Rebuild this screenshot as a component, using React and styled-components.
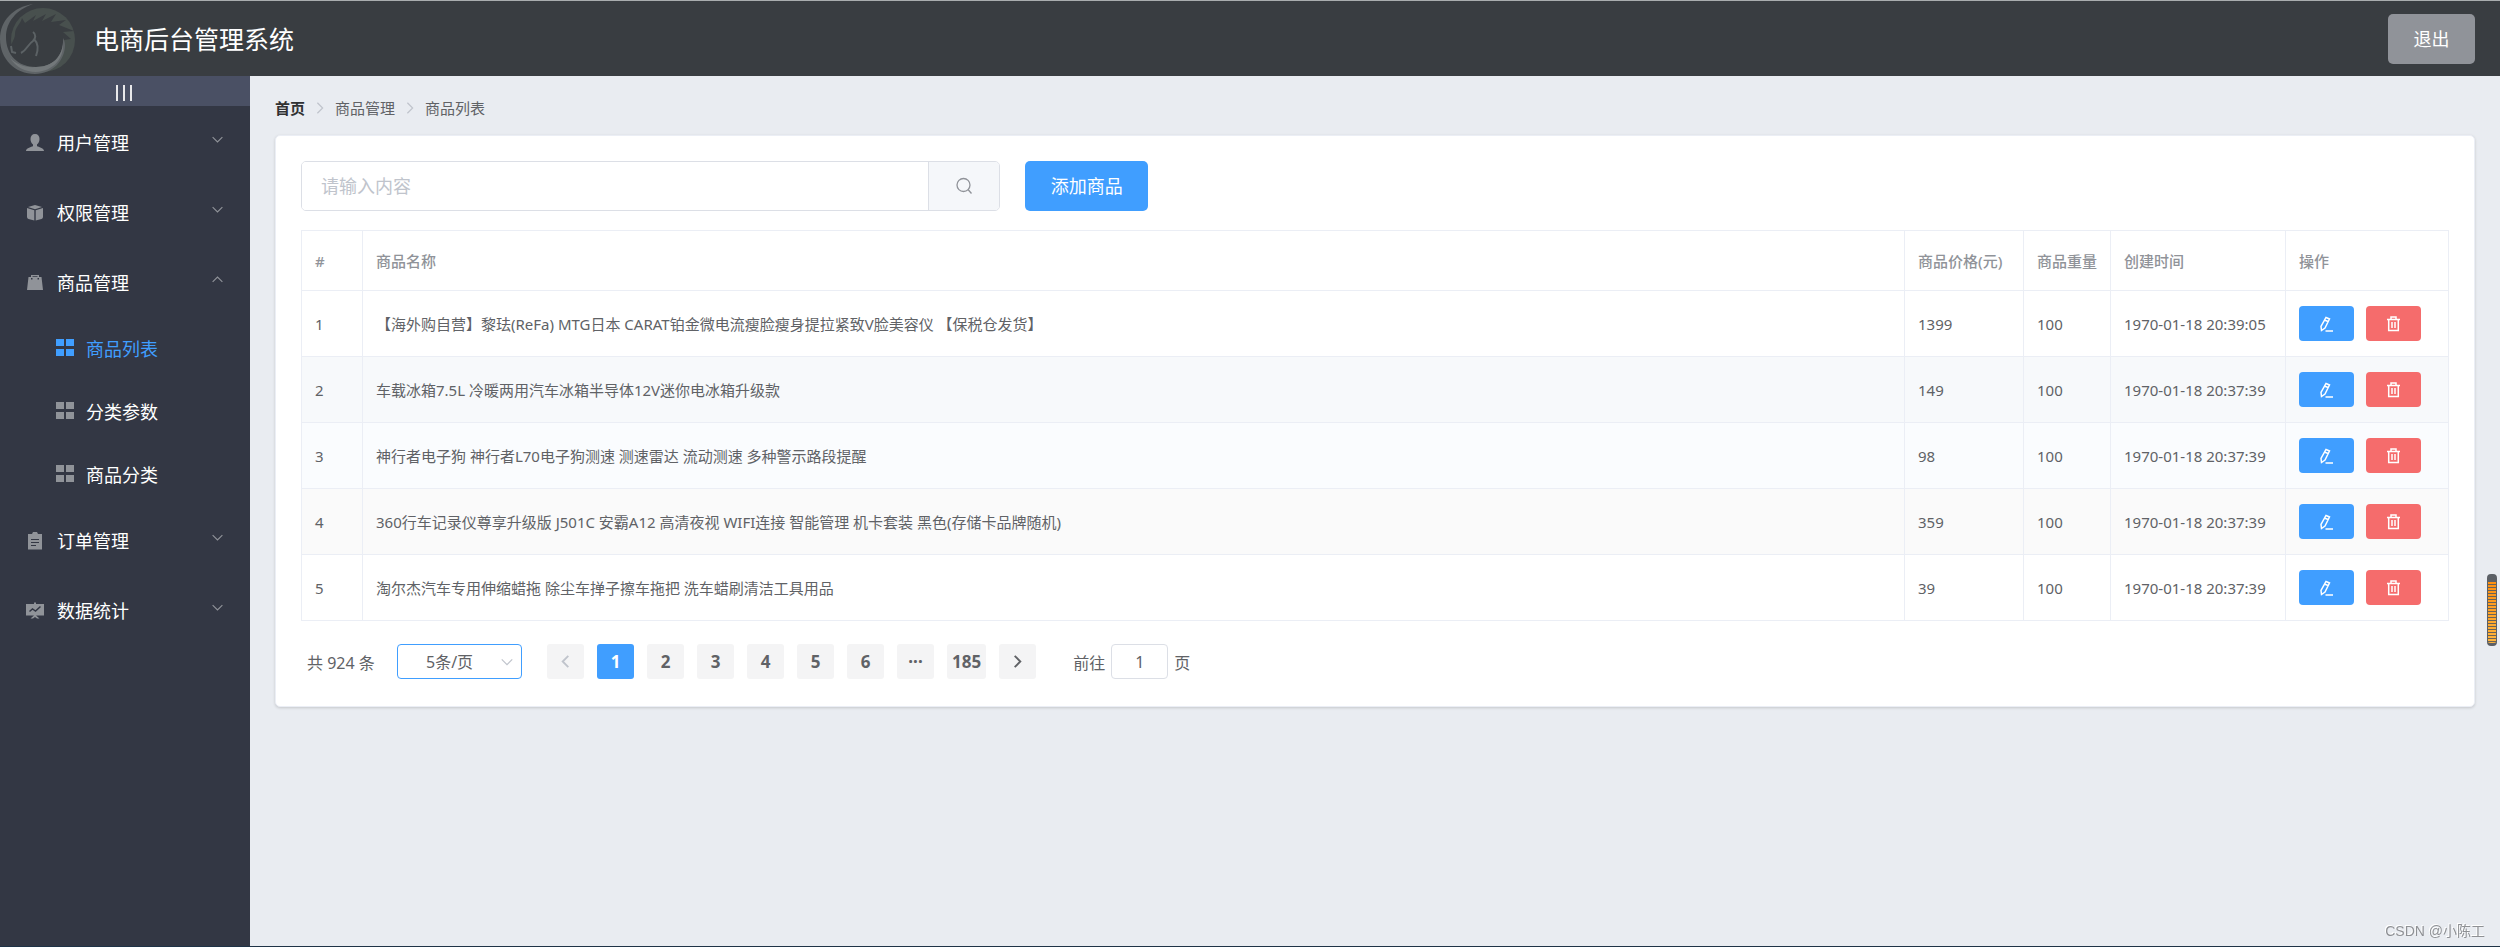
import React from 'react';
import styled, { createGlobalStyle, css } from 'styled-components';

const GlobalStyle = createGlobalStyle`
  * {
    box-sizing: border-box;
  }

  body {
    margin: 0;
    font-family: 'Noto Sans', 'Noto Sans CJK SC', sans-serif;
    background-color: #e9ecf1;
  }

  button, input, select {
    font-family: inherit;
  }
`

const Page = styled.div`
  display: flex;
  flex-direction: column;
  min-height: 100vh;
  border-top: 1px solid #a9adae;
  border-bottom: 1px solid #1f3347;
`

const Header = styled.header`
  display: flex;
  align-items: center;
  justify-content: space-between;
  height: 75px;
  padding-right: 25px;
  background-color: #393d41;
`

const Brand = styled.div`
  display: flex;
  align-items: center;
  gap: 18px;
`

const Title = styled.h1`
  margin: 0;
  font-size: 25px;
  line-height: 30px;
  font-weight: 400;
  color: #fff;
`

const LogoutButton = styled.button`
  width: 87px;
  height: 50px;
  padding: 0 0 2px;
  border: 0;
  border-radius: 5px;
  background-color: #909399;
  font-size: 18px;
  color: #fff;
  cursor: pointer;
`

const Body = styled.div`
  display: flex;
  flex: 1;
`

const Sidebar = styled.aside`
  flex: none;
  width: 250px;
  background-color: #333744;
`

const CollapseButton = styled.button`
  display: flex;
  align-items: center;
  justify-content: center;
  gap: 5px;
  width: 100%;
  height: 30px;
  padding: 4px 2px 0 0;
  border: 0;
  background-color: #4a5064;
  cursor: pointer;

  i {
    width: 2px;
    height: 16px;
    background-color: #e8e8ea;
  }
`

const menuRow = css`
  display: flex;
  align-items: center;
  width: 100%;
  border: 0;
  background: none;
  font-size: 18px;
  line-height: 24px;
  text-align: left;
  text-decoration: none;
`

const MenuTitle = styled.button`
  ${menuRow}
  height: 70px;
  padding: 4px 26px 0 25px;
  gap: 12px;
  color: #fff;
  cursor: pointer;

  svg {
    flex: none;
    color: #909399;
  }

  svg:last-child {
    margin: 0 0 8px auto;
  }
`

const SubMenu = styled.nav`
  display: flex;
  flex-direction: column;
  height: 188px;
`

const SubItem = styled.a`
  ${menuRow}
  flex: 1;
  padding: 4px 25px 0 55px;
  gap: 11px;
  color: ${(props) => (props.$active ? '#409eff' : '#fff')};

  svg {
    flex: none;
    margin-bottom: 2px;
    color: ${(props) => (props.$active ? '#409eff' : '#909399')};
  }
`

const Main = styled.main`
  flex: 1;
  min-width: 0;
  padding: 24px 25px;
`

const Breadcrumb = styled.nav`
  display: flex;
  align-items: center;
  gap: 8px;
  height: 16px;
  margin-bottom: 19px;
  font-size: 15px;
  line-height: 16px;
  color: #606266;

  a {
    font-weight: 700;
    color: #303133;
    text-decoration: none;
  }

  svg {
    color: #c0c4cc;
  }
`

const Card = styled.section`
  padding: 25px 25px 27px;
  border: 1px solid #ebeef5;
  border-radius: 5px;
  background-color: #fff;
  box-shadow: 0 1px 3px rgba(0, 0, 0, 0.16);
`

const Toolbar = styled.form`
  display: flex;
  gap: 25px;
  margin-bottom: 19px;
`

const SearchGroup = styled.div`
  display: flex;
  width: calc((100% + 25px) / 3 - 25px);
  height: 50px;
  border: 1px solid #dcdfe6;
  border-radius: 5px;
  overflow: hidden;

  input {
    flex: 1;
    min-width: 0;
    padding: 0 19px;
    border: 0;
    font-size: 18px;
    color: #606266;
    outline: none;
  }

  input::placeholder {
    color: #c0c4cc;
  }

  button {
    display: flex;
    align-items: center;
    justify-content: center;
    width: 71px;
    padding: 0;
    border: 0;
    border-left: 1px solid #dcdfe6;
    background-color: #f5f7fa;
    color: #909399;
    cursor: pointer;
  }
`

const AddButton = styled.button`
  width: 123px;
  height: 50px;
  padding: 0 0 2px;
  border: 0;
  border-radius: 5px;
  background-color: #409eff;
  font-size: 18px;
  color: #fff;
  cursor: pointer;
`

const Table = styled.table`
  width: 100%;
  table-layout: fixed;
  border-collapse: separate;
  border-spacing: 0;
  border-top: 1px solid #ebeef5;
  border-left: 1px solid #ebeef5;
  font-size: 15px;
  line-height: 20px;
  color: #606266;

  th, td {
    padding: 0 12px 0 13px;
    border-right: 1px solid #ebeef5;
    border-bottom: 1px solid #ebeef5;
    text-align: left;
    white-space: nowrap;
  }

  th {
    height: 60px;
    font-weight: 500;
    color: #909399;
  }

  td {
    height: 66px;
  }
`

const Col = styled.col`
  width: ${(props) => (props.$width ? `${props.$width}px` : 'auto')};
`

const Row = styled.tr`
  background-color: ${(props) => props.$bg};
`

const Actions = styled.div`
  display: flex;
  gap: 12px;
`

const IconButton = styled.button`
  display: flex;
  align-items: center;
  justify-content: center;
  width: 55px;
  height: 35px;
  padding: 0;
  border: 0;
  border-radius: 4px;
  background-color: ${(props) => (props.$danger ? '#f56c6c' : '#409eff')};
  color: #fff;
  cursor: pointer;
`

const Pagination = styled.div`
  display: flex;
  align-items: center;
  height: 35px;
  margin-top: 23px;
  padding-left: 6px;
  font-size: 16px;
  color: #606266;
`

const Total = styled.span`
  width: 90px;
`

const SizeSelect = styled.div`
  display: flex;
  align-items: center;
  width: 125px;
  margin-right: 25px;
  color: #c0c4cc;

  select {
    flex: none;
    width: 125px;
    height: 35px;
    margin-right: -22px;
    padding: 0 30px 0 28px;
    appearance: none;
    border: 1px solid #409eff;
    border-radius: 4px;
    background: none;
    font-size: 16px;
    color: #606266;
    outline: none;
  }

  svg {
    flex: none;
    pointer-events: none;
  }
`

const Pager = styled.div`
  display: flex;
  gap: 13px;
  margin-right: 37px;
`

const PageButton = styled.button`
  display: flex;
  align-items: center;
  justify-content: center;
  min-width: 37px;
  height: 35px;
  padding: 0 5px;
  border: 0;
  border-radius: 3px;
  background-color: ${(props) => (props.$active ? '#409eff' : '#f4f4f5')};
  font-size: 17px;
  font-weight: 700;
  color: ${(props) => (props.$active ? '#fff' : '#606266')};
  cursor: pointer;

  &:disabled {
    color: #c0c4cc;
  }
`

const Jumper = styled.label`
  display: flex;
  align-items: center;
  gap: 6px;

  input {
    width: 57px;
    height: 35px;
    padding: 0;
    border: 1px solid #dcdfe6;
    border-radius: 4px;
    font-size: 16px;
    text-align: center;
    color: #606266;
  }
`

const Gauge = styled.div`
  position: fixed;
  top: 574px;
  right: 3px;
  width: 10px;
  height: 72px;
  border: solid #5c6066;
  border-width: 8px 1px 3px;
  border-radius: 4px;
  background:
    repeating-linear-gradient(transparent 0 2px, #6a6258 2px 3px),
    linear-gradient(#ff8f0f, #ffb53c);
`

const Watermark = styled.span`
  position: fixed;
  right: 15px;
  bottom: 7px;
  font-family: 'Liberation Sans', 'Noto Sans CJK SC', sans-serif;
  font-size: 14px;
  line-height: 18px;
  color: #8f9195;
  text-shadow: -1px -1px 0 #fff;
`

const Logo = () => (
  <svg width="76" height="75" viewBox="0 0 76 75" aria-hidden="true">
    <circle cx="43" cy="39" r="32" fill="#48504e" />
    <path fill="#393d41" d="M22 17l3 5 11-8-3 6 13-7-4 7 14-7-5 8 15-2-7 5 15 6-11 1 8 7-7 1c0 17-12 27-28 27-14 0-26-7-26-17 0-6 5-10 5-16 0-7 5-9 7-16z" />
    <path fill="#5f6467" d="M33 3C13 6 0 20 0 38c0 20 15 35 35 35 18 0 30-14 30-29 0-3-1-5-2-7 1 18-10 29-27 29C18 66 6 54 6 36 6 21 16 9 33 3z" />
    <path fill="#73787a" d="M10 57c6 6 15 10 26 9 17 0 26-11 27-24 1 15-9 28-27 29-11 0-20-5-26-14z" />
    <path fill="none" stroke="#5c6265" strokeWidth="2" d="M33 31c3 2 3 6 0 9-5 3-6 9-12 12M34 38c4 4 5 9 2 17M11 45l1 6 4 1" />
  </svg>
)

const Chevron = ({ dir = 'down', size = 13, weight = 1.4 }) => {
  const paths = {
    down: 'M2 5l6 6 6-6',
    up: 'M2 11l6-6 6 6',
    left: 'M11 2L5 8l6 6',
    right: 'M5 2l6 6-6 6',
  }
  return (
    <svg width={size} height={size} viewBox="0 0 16 16" fill="none" stroke="currentColor" strokeWidth={weight} aria-hidden="true">
      <path d={paths[dir]} />
    </svg>
  )
}

const UserIcon = () => (
  <svg width="20" height="20" viewBox="0 0 20 20" fill="currentColor">
    <path d="M10 1c3 0 4.500 2 4.500 5 0 2.400-1 4.400-2.500 5.500v1.700C14.500 14.200 19 15 19 18H1c0-3 4.500-3.800 7-4.800v-1.700C6.500 10.400 5.500 8.400 5.500 6c0-3 1.500-5 4.500-5z" />
  </svg>
)

const BoxIcon = () => (
  <svg width="20" height="20" viewBox="0 0 20 20" fill="currentColor">
    <path d="M10 2l7 2-7 2.200L3 4zM2 5l7.300 2.300V17.500L3.500 16Q2 15.600 2 14zM18 5l-7.300 2.300V17.500l5.800-1.500q1.500-.4 1.500-2z" />
  </svg>
)

const BagIcon = () => (
  <svg width="20" height="20" viewBox="0 0 20 20" fill="currentColor">
    <path d="M6 4V2h8v2h2.500L18 17H2L3.500 4zm1.500 0h5V3.200h-5zM6 5v1.500h1.500V5zm6.500 0v1.500H14V5z" fillRule="evenodd" />
  </svg>
)

const OrderIcon = () => (
  <svg width="20" height="20" viewBox="0 0 20 20">
    <path fill="currentColor" d="M3 3h4l1-2h4l1 2h4v15.500H3z" />
    <path stroke="#333744" strokeWidth="1.200" d="M6 8.500h8M6 11.500h8M6 14.500h5" />
  </svg>
)

const DataIcon = () => (
  <svg width="20" height="20" viewBox="0 0 20 20">
    <path fill="currentColor" d="M1 3h8V1.500h2V3h8v11.500H1zM9 14.500h2l3.500 3H12L10 16l-2 1.500H5.500z" />
    <path fill="none" stroke="#333744" strokeWidth="1.500" d="M4.500 10.500l3-2.500 3 2 5-4.500" />
  </svg>
)

const GridIcon = () => (
  <svg width="20" height="20" viewBox="0 0 20 20" fill="currentColor">
    <path d="M1 1h8v7H1zM11 1h8v7h-8zM1 11h8v7H1zM11 11h8v7h-8z" />
  </svg>
)

const SearchIcon = () => (
  <svg width="18" height="18" viewBox="0 0 18 18" fill="none" stroke="currentColor" strokeWidth="1.300">
    <circle cx="8.500" cy="8" r="6.500" />
    <path d="M13 12.500l3.500 4" />
  </svg>
)

const EditIcon = () => (
  <svg width="15" height="16" viewBox="0 0 15 16" fill="none" stroke="currentColor" strokeWidth="1.500">
    <path d="M7 1.500l3.500 1.500-4.500 9-3.500 2.500-.5-4zM5.500 4l3.500 1.500M6.500 15h7.500" />
  </svg>
)

const DeleteIcon = () => (
  <svg width="15" height="16" viewBox="0 0 15 16" fill="none" stroke="currentColor" strokeWidth="1.500">
    <path d="M1 3.500h13M5 3V1h5v2M2.700 3.500v11h9.600v-11M6 6v6M9 6v6" />
  </svg>
)

const goods = [
  { name: '【海外购自营】黎珐(ReFa) MTG日本 CARAT铂金微电流瘦脸瘦身提拉紧致V脸美容仪 【保税仓发货】', price: 1399, weight: 100, time: '1970-01-18 20:39:05', bg: '#fff' },
  { name: '车载冰箱7.5L 冷暖两用汽车冰箱半导体12V迷你电冰箱升级款', price: 149, weight: 100, time: '1970-01-18 20:37:39', bg: '#f7f9fb' },
  { name: '神行者电子狗 神行者L70电子狗测速 测速雷达 流动测速 多种警示路段提醒', price: 98, weight: 100, time: '1970-01-18 20:37:39', bg: '#fafcfe' },
  { name: '360行车记录仪尊享升级版 J501C 安霸A12 高清夜视 WIFI连接 智能管理 机卡套装 黑色(存储卡品牌随机)', price: 359, weight: 100, time: '1970-01-18 20:37:39', bg: '#fafafa' },
  { name: '淘尔杰汽车专用伸缩蜡拖 除尘车掸子擦车拖把 洗车蜡刷清洁工具用品', price: 39, weight: 100, time: '1970-01-18 20:37:39', bg: '#fff' },
]

const Menu = () => (
  <Sidebar>
    <CollapseButton aria-label="折叠菜单"><i /><i /><i /></CollapseButton>
    <MenuTitle><UserIcon />用户管理<Chevron /></MenuTitle>
    <MenuTitle><BoxIcon />权限管理<Chevron /></MenuTitle>
    <MenuTitle><BagIcon />商品管理<Chevron dir="up" /></MenuTitle>
    <SubMenu>
      <SubItem href="#/goods" $active><GridIcon />商品列表</SubItem>
      <SubItem href="#/params"><GridIcon />分类参数</SubItem>
      <SubItem href="#/categories"><GridIcon />商品分类</SubItem>
    </SubMenu>
    <MenuTitle><OrderIcon />订单管理<Chevron /></MenuTitle>
    <MenuTitle><DataIcon />数据统计<Chevron /></MenuTitle>
  </Sidebar>
)

const GoodsTable = () => (
  <Table>
    <colgroup>
      <Col $width={61} />
      <Col />
      <Col $width={119} />
      <Col $width={87} />
      <Col $width={175} />
      <Col $width={163} />
    </colgroup>
    <thead>
      <tr>
        <th>#</th>
        <th>商品名称</th>
        <th>商品价格(元)</th>
        <th>商品重量</th>
        <th>创建时间</th>
        <th>操作</th>
      </tr>
    </thead>
    <tbody>
      {goods.map((item, index) => (
        <Row key={item.name} $bg={item.bg}>
          <td>{index + 1}</td>
          <td>{item.name}</td>
          <td>{item.price}</td>
          <td>{item.weight}</td>
          <td>{item.time}</td>
          <td>
            <Actions>
              <IconButton aria-label="编辑"><EditIcon /></IconButton>
              <IconButton aria-label="删除" $danger><DeleteIcon /></IconButton>
            </Actions>
          </td>
        </Row>
      ))}
    </tbody>
  </Table>
)

const App = () => {
  return (
    <>
      <GlobalStyle />
      <Page>
        <Header>
          <Brand>
            <Logo />
            <Title>电商后台管理系统</Title>
          </Brand>
          <LogoutButton>退出</LogoutButton>
        </Header>
        <Body>
          <Menu />
          <Main>
            <Breadcrumb>
              <a href="#/home">首页</a>
              <Chevron dir="right" size={14} />
              <span>商品管理</span>
              <Chevron dir="right" size={14} />
              <span>商品列表</span>
            </Breadcrumb>
            <Card>
              <Toolbar onSubmit={(e) => e.preventDefault()}>
                <SearchGroup>
                  <input type="text" placeholder="请输入内容" aria-label="请输入内容" />
                  <button aria-label="搜索"><SearchIcon /></button>
                </SearchGroup>
                <AddButton type="button">添加商品</AddButton>
              </Toolbar>
              <GoodsTable />
              <Pagination>
                <Total>共 924 条</Total>
                <SizeSelect>
                  <select aria-label="每页条数" defaultValue="5">
                    <option value="5">5条/页</option>
                    <option value="10">10条/页</option>
                  </select>
                  <Chevron size={14} />
                </SizeSelect>
                <Pager>
                  <PageButton disabled aria-label="上一页"><Chevron dir="left" size={15} weight={2} /></PageButton>
                  {[1, 2, 3, 4, 5, 6, '···', 185].map((page) => (
                    <PageButton key={page} $active={page === 1}>{page}</PageButton>
                  ))}
                  <PageButton aria-label="下一页"><Chevron dir="right" size={15} weight={2} /></PageButton>
                </Pager>
                <Jumper>
                  前往
                  <input type="text" defaultValue="1" />
                  页
                </Jumper>
              </Pagination>
            </Card>
          </Main>
        </Body>
      </Page>
      <Gauge />
      <Watermark>CSDN @小陈工</Watermark>
    </>
  )
}
export default App;
